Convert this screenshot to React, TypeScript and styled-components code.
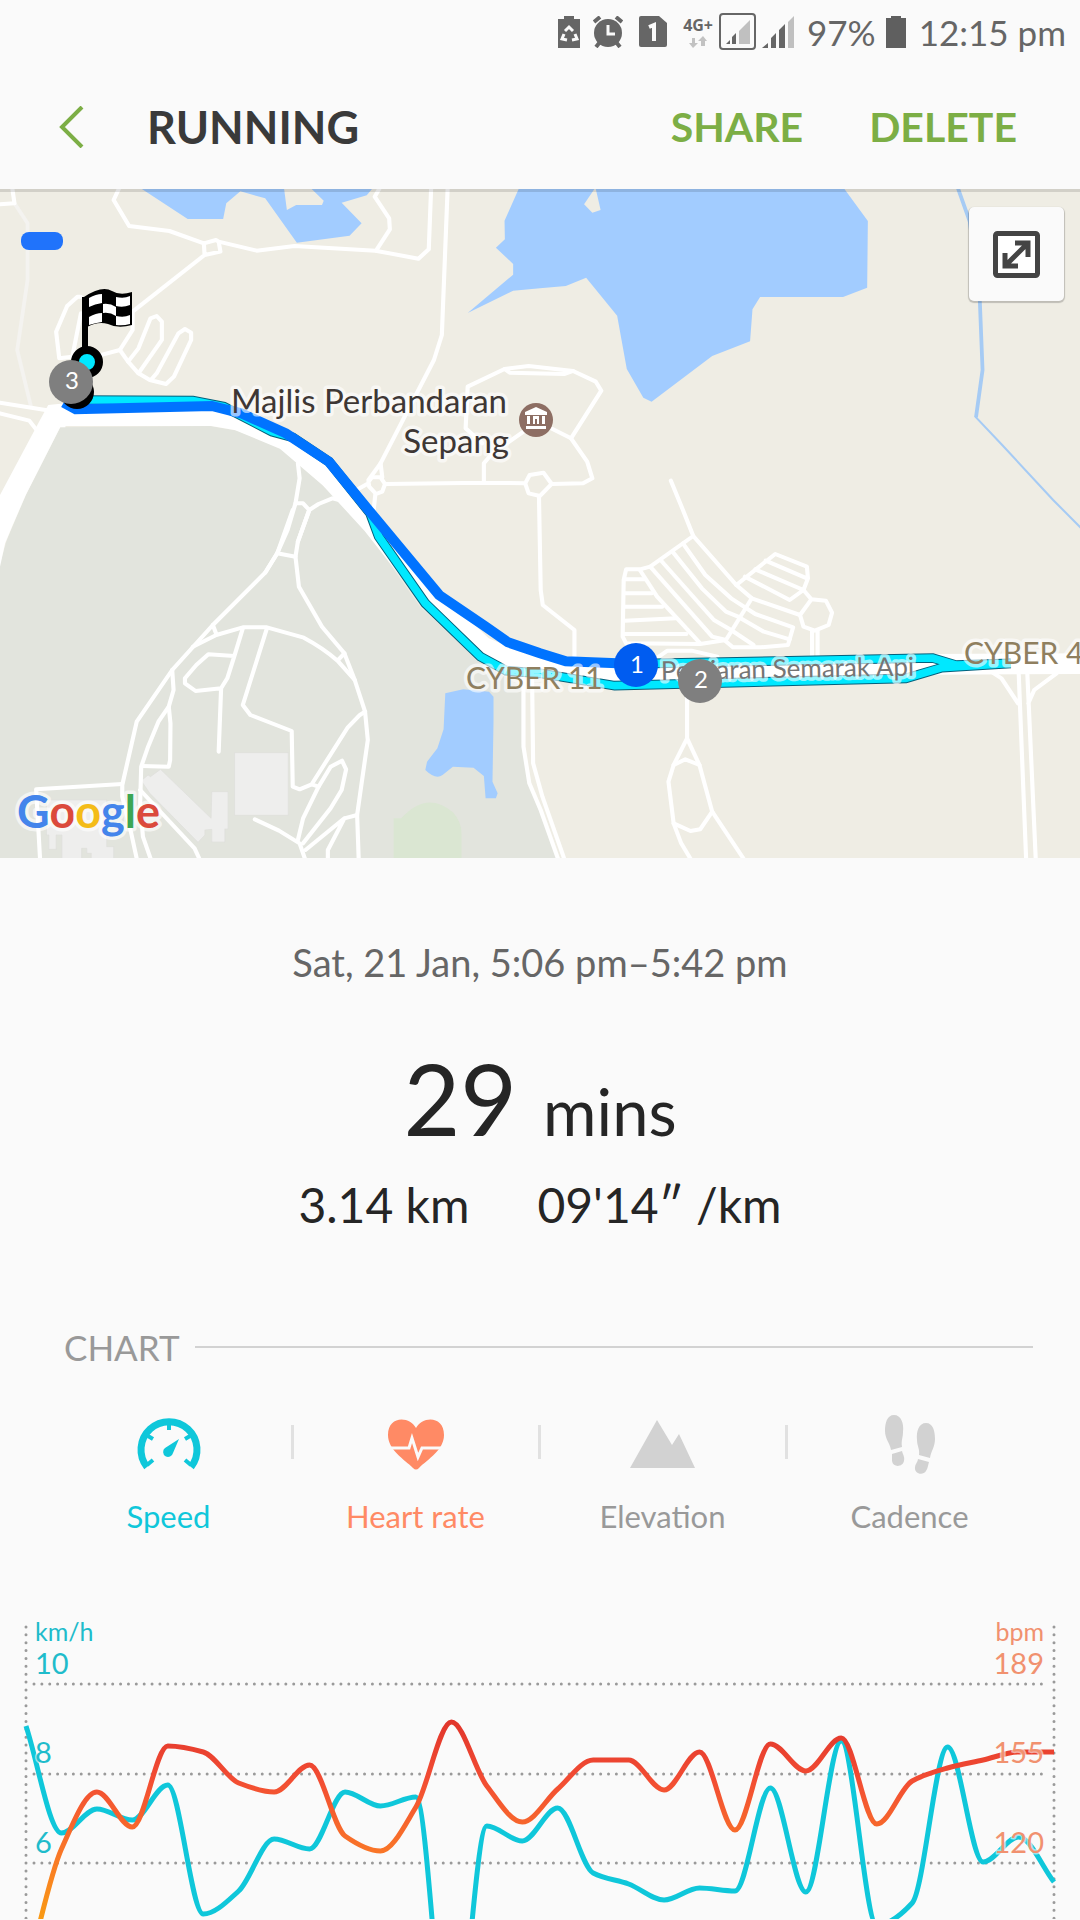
import React from "react";
import styled, { createGlobalStyle } from "styled-components";

const GlobalStyle = createGlobalStyle`
  *, *::before, *::after { box-sizing: border-box; }
  body { margin: 0; background: #fafafa; }
  button { font: inherit; border: 0; padding: 0; background: none; cursor: pointer; }
`;

const colors = {
  text: "#252525",
  muted: "#666666",
  faint: "#999999",
  green: "#7cae45",
  speed: "#0fc7da",
  heart: "#ff8a65",
  idle: "#d2d2d2",
};

const Screen = styled.div`
  width: 100%;
  overflow: hidden;
  background: #fafafa;
  color: ${colors.text};
  font-family: Lato, "Open Sans", sans-serif;
`;

const StatusBar = styled.div`
  display: flex;
  align-items: center;
  justify-content: flex-end;
  height: 64px;
  padding-right: 14px;
  color: ${colors.muted};
  font-size: 35px;
  line-height: 40px;
`;

const StatusItem = styled.span<{ $gap: number }>`
  display: flex;
  flex: none;
  margin-left: ${(p) => p.$gap}px;
`;

const Network = styled.span`
  display: flex;
  flex-direction: column;
  align-items: center;
  margin-left: 16px;
  gap: 3px;
  font: bold 16px/16px "Open Sans", sans-serif;
`;

const Header = styled.header`
  position: relative;
  z-index: 1;
  display: flex;
  align-items: center;
  height: 125px;
  padding: 0 63px 0 59px;
  box-shadow: 0 3px 0 rgba(0, 0, 0, 0.12);
`;

const BackButton = styled.button`
  display: flex;
  width: 88px;
  color: ${colors.green};
`;

const Title = styled.h1`
  flex: 1;
  margin: 0;
  color: #3a3a3a;
  font-size: 45px;
  line-height: 56px;
  font-weight: bold;
`;

const Actions = styled.div`
  display: flex;
  gap: 66px;
`;

const ActionButton = styled.button`
  color: ${colors.green};
  font-size: 41px;
  line-height: 56px;
  font-weight: bold;
`;

const MapFrame = styled.section`
  position: relative;
  aspect-ratio: 1080 / 669;
`;

const MapDrawing = styled.svg`
  display: block;
  width: 100%;
  height: 100%;
`;

const MapLabel = styled.text<{ $size: number }>`
  font-size: ${(p) => p.$size}px;
  paint-order: stroke;
  stroke: rgba(255, 255, 255, 0.6);
  stroke-width: 7px;
  stroke-linejoin: round;
`;

const MarkerNumber = styled.text`
  fill: #fff;
  font-size: 24px;
  text-anchor: middle;
`;

const ExpandButton = styled.button`
  position: absolute;
  top: 18px;
  right: 16px;
  display: grid;
  place-items: center;
  width: 95px;
  height: 94px;
  border-radius: 5px;
  background: #fafafa;
  box-shadow: 0 1px 1px 1px rgba(0, 0, 0, 0.2);
`;

const Summary = styled.section`
  display: flex;
  flex-direction: column;
  align-items: center;
  padding-top: 80px;
`;

const When = styled.p`
  margin: 0;
  color: ${colors.muted};
  font-size: 38px;
  line-height: 48px;
`;

const Duration = styled.p`
  display: flex;
  align-items: baseline;
  gap: 26px;
  margin: 52px 0 0;
  font-size: 98px;
  line-height: 120px;
`;

const DurationUnit = styled.span`
  font-size: 65px;
`;

const Totals = styled.div`
  display: flex;
  gap: 68px;
  margin-top: 2px;
  font-size: 48px;
  line-height: 64px;
`;

const SectionTitle = styled.h2`
  display: flex;
  align-items: center;
  gap: 15px;
  margin: 86px 47px 0 64px;
  color: ${colors.faint};
  font-size: 35px;
  line-height: 48px;
  font-weight: normal;

  &::after {
    content: "";
    flex: 1;
    height: 2px;
    background: ${colors.idle};
  }
`;

const Tabs = styled.div`
  display: grid;
  grid-template-columns: repeat(4, 1fr);
  margin: 37px 47px 0 45px;
`;

const Tab = styled.button<{ $color: string }>`
  position: relative;
  display: flex;
  flex-direction: column;
  align-items: center;
  gap: 18px;
  color: ${(p) => p.$color};
  font-size: 31px;
  line-height: 40px;

  &:not(:first-child)::before {
    content: "";
    position: absolute;
    left: -1px;
    top: 17px;
    width: 3px;
    height: 34px;
    background: #e1e1e1;
  }
`;

const TabIcon = styled.svg`
  display: block;
  width: 70px;
  height: 70px;
`;

const ChartDrawing = styled.svg`
  display: block;
  width: 100%;
  aspect-ratio: 1080 / 320;
  margin-top: 63px;
`;

const AxisLabel = styled.text<{ $unit?: boolean }>`
  font-size: ${(p) => (p.$unit ? 25 : 29)}px;
  paint-order: stroke;
  stroke: rgba(250, 250, 250, 0.6);
  stroke-width: 3px;
`;

/* ---------- map ---------- */

const northWestRoads = [
  "M35 20L42 70L0 73",
  "M348 20L330 60L375 138L492 153L592 190L627 180L635 185L745 212L855 198L1090 212L1215 236L1245 208L1252 20",
  "M592 190L594 225L640 215L635 185M594 225L385 395V450L348 510L275 530",
  "M1105 20L1088 50L1130 115L1132 148L1092 212",
  "M1300 20L1283 465L1260 540L1105 850L1070 900",
  "M235 350H225L195 378L163 455L172 535L210 530L235 400",
  "M348 510L372 545L402 580L435 600L482 612L505 590L555 480V458L537 447L518 460L455 580L440 598",
  "M372 545L402 505L437 415L455 408L470 425V480L402 580",
  "M1070 905L1080 892H1105L1118 912L1110 935L1092 942L1072 920ZM1105 850L1110 892M1035 930L1070 910M1090 942L1085 990",
  "M1120 912L1405 908L1525 910M1405 908V850L1430 820L1520 755",
  "M1400 790L1352 745L1358 620L1465 567L1535 558L1664 573L1730 605L1746 632L1658 775L1600 745",
  "M1465 567L1480 578L1640 582L1664 573M1658 775L1705 845L1720 895L1693 910L1602 912",
  "M1525 910L1538 885L1578 878L1602 912L1568 948L1535 940ZM1565 948L1570 1230L1576 1275L1668 1350V1430",
  "M0 668L150 693M0 700L85 722L110 755",
  "M865 850L870 895L858 970L835 1050L805 1120L770 1178M985 960L965 955L925 972L898 990L865 1085",
  "M858 970H880L898 990",
];

const southWestRoads = [
  "M850 0L805 130L770 188L618 345L500 480L397 635L355 825V860L380 965L400 1060",
  "M898 0L865 95L858 140L868 230L935 350L1000 430L1030 510L1060 605L1068 690L1050 820L1037 915L1042 1060",
  "M805 130L858 140M618 345L628 372M560 410L628 375L705 352H775L882 383Q940 415 980 452L1030 510M980 452L1000 430",
  "M705 355L680 440L660 505L642 535L635 725M680 438L605 433L570 465L537 505V520L568 543L642 535",
  "M775 355L705 585L727 615L847 663L850 830L870 838L905 823L1010 652L1045 615L1060 605M905 823L925 830",
  "M500 480L504 540L490 590L460 635L430 710L410 770L407 880L415 980L442 1060",
  "M490 590L495 640L494 750L490 770L412 768",
  "M355 822L105 838L117 1060M407 840L565 1015L585 1060",
  "M740 928L810 962L870 1000L890 1060",
  "M865 990L880 925L925 830L960 770L993 752L1005 778L992 840L960 895L880 1000",
  "M887 1020L1000 925L1037 915M1000 925L952 1020V1060",
  "M1520 500V710L1537 820L1570 900L1625 1060M1545 500L1548 760L1575 860L1643 1060",
];

const southEastRoads = [
  "M380 -88L415 0L445 78L570 225L615 265L755 315",
  "M445 78L320 170L290 178H250L243 210L240 380L250 400L465 402L540 390L615 265",
  "M245 208H305M245 250H325M245 290H355M245 332L395 325M245 372H425",
  "M290 180L340 260L465 400M320 170L500 380L540 390M350 150L505 330L555 360L620 405",
  "M385 125L470 235L540 305L575 320L650 365L725 388",
  "M415 100L480 195L555 265L625 312L735 352L720 405L640 412H560L535 390",
  "M570 225L683 132L775 170L778 205L765 240L725 270L595 200M655 152L775 205M625 178L765 240",
  "M765 240L788 268L830 272L848 308L838 345L798 362L765 350L755 315L788 268",
  "M790 362V440M806 362V440M345 440L370 422H440L515 440",
  "M427 540V685L388 765L373 815L388 940L410 1000L445 1060M427 685L463 765L500 905L600 1060",
  "M388 765L422 748L463 765M388 940L437 963L465 958L500 905",
  "M1390 490L1412 1060M1415 490L1440 1060M1310 485L1340 505L1388 580M1500 490L1435 540L1418 580",
];

const outboundRoute =
  "M230 660L560 662L650 680L790 755L850 772L955 845L1075 1000L1100 1070L1235 1270L1395 1430L1470 1472L1568 1480L1785 1517L2630 1495L2735 1463L2935 1450L2775 1455L2708 1434L1900 1450";
const returnRoute =
  "M185 668L220 688L615 678L700 700L830 760L955 845L1070 990L1275 1245L1410 1340L1475 1387L1568 1420L1643 1444L1850 1452";

function Roads({ paths }: { paths: string[] }) {
  return (
    <>
      {paths.map((d) => (
        <path key={d} d={d} />
      ))}
    </>
  );
}

function RouteMap() {
  return (
    <MapDrawing viewBox="0 0 1080 669" preserveAspectRatio="xMidYMid slice" role="img" aria-label="Route map">
      <rect width="1080" height="669" fill="#efede4" />
      <g transform="translate(0 -9) scale(0.34439 0.33333)" fill="none" strokeLinejoin="round">
        <path
          fill="#e2e4dd"
          d="M175 742L610 738L690 752L815 805L855 840L985 960L1090 1090L1220 1280L1400 1450L1515 1520V1690L1535 1810L1568 1900L1625 2050H0V1150L20 1080L75 945Z"
        />
        <g fill="#a2ccff">
          <path
            fillRule="evenodd"
            d="M412 27L545 117H648L657 70L698 34L770 55L862 188L1015 167L1050 130L992 68L1065 46L1080 27ZM825 27L833 90L860 75H935L940 62L905 27Z"
          />
          <path
            fillRule="evenodd"
            d="M1506 27L1465 122L1466 178L1440 203L1490 252V284L1358 399L1490 332L1568 325L1643 318L1702 293L1792 407L1820 567L1868 653L1892 665L2068 528L2178 484L2185 388L2207 351H2448L2518 323L2520 123L2452 27ZM1726 27L1696 73L1720 98L1744 90L1730 27Z"
          />
          <path d="M1293 1540L1345 1528L1420 1535L1433 1550V1625L1430 1805L1445 1840L1440 1855H1410L1405 1788L1375 1763L1315 1760L1285 1785Q1265 1800 1235 1770L1240 1745L1270 1705L1288 1648Z" />
        </g>
        <path stroke="#a6cbf4" strokeWidth="11" d="M2780 20L2816 125L2845 360L2853 570L2834 712" />
        <path stroke="#a6cbf4" strokeWidth="6" d="M2832 710L2910 795L3058 960L3140 1045" />
        <path fill="#dae6d2" d="M1143 2040V1915H1165Q1240 1830 1315 1897Q1340 1925 1340 1960V2040Z" />
        <g fill="#eeeeed" stroke="#dedfdb" strokeWidth="2">
          <path d="M681 1718H837V1906H681Z" />
          <path d="M466 1768L613 1915L615 1835H662V1947H653V1986H615V1948L595 1950V1965L575 1987L435 1840L410 1802L430 1785L437 1790Z" />
          <path d="M135 1860H310V2000H330V2040H265V2020H252V2005H237V2040H180V1965H163V2008H142V1965H135Z" />
        </g>
        <path stroke="#f4f3f0" strokeWidth="11" d="M42 70L80 130V300L50 510L90 680" />
        <g stroke="#fff" strokeWidth="12" strokeLinecap="round">
          <Roads paths={northWestRoads} />
          <g transform="translate(0 990)">
            <Roads paths={southWestRoads} />
          </g>
          <g transform="translate(1568 990)">
            <Roads paths={southEastRoads} />
          </g>
        </g>
        <path fill="#fff" d="M140 675L190 670V742H175L75 945L35 1040L15 1090L0 1160V945L115 722Z" />
        <path
          stroke="#fff"
          strokeWidth="62"
          d="M165 707L610 706L690 720L830 780L960 895L1080 1030L1240 1240L1400 1400L1500 1445L1790 1490L2300 1465L2710 1453L3150 1451"
        />
        <path stroke="#03607c" strokeWidth="29" strokeLinejoin="miter" d={outboundRoute} />
        <path stroke="#00e8ff" strokeWidth="23" strokeLinejoin="miter" d={outboundRoute} />
        <path stroke="#0073ff" strokeWidth="30" strokeLinejoin="miter" d={returnRoute} />
      </g>

      <MapLabel $size={33} x="507" y="224" textAnchor="end" fill="#3e3735">Majlis Perbandaran</MapLabel>
      <MapLabel $size={33} x="509" y="264" textAnchor="end" fill="#3e3735">Sepang</MapLabel>
      <MapLabel $size={30} x="466" y="500" fill="#8f7f5f">CYBER 11</MapLabel>
      <MapLabel $size={30} x="964" y="475" fill="#8f7f5f">CYBER 4</MapLabel>
      <MapLabel $size={26} x="661" y="491" fill="#757575" transform="rotate(-1 660 491)">Persiaran Semarak Api</MapLabel>

      <circle cx="536" cy="231" r="17" fill="#8d6e63" />
      <path
        fill="#fff"
        d="M525 226V223L536 218L547 223V226ZM526 237H546V240H526ZM527 227H530V235H527ZM533 227H539V235H537V230H535V235H533ZM542 227H545V235H542Z"
      />

      <rect x="21" y="43" width="42" height="18" rx="8" fill="#2073fb" />

      <path d="M82 108H88V162H82Z" />
      <path d="M84 108Q102 96 112 102Q120 107 132 103V136Q118 140 108 135Q98 132 87 138Z" />
      <path
        fill="#fff"
        d="M89 109Q96 105 102 105V114Q95 115 89 118ZM89 128Q96 124 102 124V133Q95 134 89 136ZM116 108Q124 110 130 107V116Q123 119 116 117ZM116 127Q124 129 130 126V135Q123 137 116 136ZM103 115Q110 114 116 118V127Q110 123 103 124Z"
      />
      <circle cx="77" cy="203" r="17" fill="#000" />
      <circle cx="87" cy="173" r="12" fill="#00e8ff" stroke="#000" strokeWidth="8" />
      <circle cx="71" cy="193" r="22" fill="#7f7f7f" />
      <circle cx="636" cy="476" r="22" fill="#005cf0" />
      <circle cx="700" cy="492" r="22" fill="#7f7f7f" />
      <MarkerNumber x="72" y="200">3</MarkerNumber>
      <MarkerNumber x="637" y="484">1</MarkerNumber>
      <MarkerNumber x="701" y="499">2</MarkerNumber>

      <MapLabel $size={45} x="17" y="639" fontWeight="bold">
        <tspan fill="#4485eb">G</tspan>
        <tspan fill="#db4a3c">o</tspan>
        <tspan fill="#f4bc18">o</tspan>
        <tspan fill="#4485eb">g</tspan>
        <tspan fill="#3ca654">l</tspan>
        <tspan fill="#db4a3c">e</tspan>
      </MapLabel>
    </MapDrawing>
  );
}

/* ---------- chart ---------- */

const speed = [
  127, 234, 210, 221, 186, 315, 292, 240, 250, 193, 207, 198, 480, 227, 242, 209, 274, 285, 301, 289, 292, 189, 293,
  142, 326, 304, 148, 263, 238, 283,
];
const heartRate = [
  378, 250, 193, 228, 147, 153, 184, 193, 166, 237, 252, 208, 123, 187, 223, 190, 161, 161, 191, 153, 231, 145, 172,
  139, 225, 182, 169, 161, 153, 153,
];

const LEFT = 26;
const RIGHT = 1054;

function smoothPath(values: number[]) {
  const step = (RIGHT - LEFT) / (values.length - 1);
  const slope = values.map((v, i) => {
    if (i === 0) return values[1] - v;
    if (i === values.length - 1) return v - values[i - 1];
    const before = v - values[i - 1];
    const after = values[i + 1] - v;
    if (before * after <= 0) return 0;
    return (2 * before * after) / (before + after);
  });
  return values
    .map((v, i) => {
      const x = LEFT + step * i;
      if (i === 0) return `M${x} ${v}`;
      const c1 = `${x - (step * 2) / 3} ${values[i - 1] + slope[i - 1] / 3}`;
      const c2 = `${x - step / 3} ${v - slope[i] / 3}`;
      return `C${c1} ${c2} ${x} ${v}`;
    })
    .join("");
}

function Chart() {
  return (
    <ChartDrawing viewBox="0 0 1080 320" role="img" aria-label="Speed and heart rate over time">
      <defs>
        <linearGradient id="pulse" gradientUnits="userSpaceOnUse" x1="0" y1="120" x2="0" y2="320">
          <stop offset="0" stopColor="#e0352b" />
          <stop offset="0.3" stopColor="#f24c33" />
          <stop offset="0.65" stopColor="#f97428" />
          <stop offset="1" stopColor="#f99a14" />
        </linearGradient>
      </defs>
      <g stroke="#9a9a9a" strokeWidth="3" strokeLinecap="round" strokeDasharray="0 7.87">
        {[85, 175, 264].map((y) => (
          <path key={y} d={`M34 ${y}H1046`} />
        ))}
        <path d="M26 28V330M1054 28V330" />
      </g>
      <g fill="none" strokeWidth="5">
        <path d={smoothPath(speed)} stroke={colors.speed} />
        <path d={smoothPath(heartRate)} stroke="url(#pulse)" />
      </g>
      <g fill="#1fbccb">
        <AxisLabel $unit x="35" y="42">km/h</AxisLabel>
        <AxisLabel x="35" y="75">10</AxisLabel>
        <AxisLabel x="35" y="164">8</AxisLabel>
        <AxisLabel x="35" y="254">6</AxisLabel>
      </g>
      <g fill="#f1916f" textAnchor="end">
        <AxisLabel $unit x="1044" y="42">bpm</AxisLabel>
        <AxisLabel x="1044" y="75">189</AxisLabel>
        <AxisLabel x="1044" y="164">155</AxisLabel>
        <AxisLabel x="1044" y="254">120</AxisLabel>
      </g>
    </ChartDrawing>
  );
}

/* ---------- page ---------- */

export default function App() {
  return (
    <Screen>
      <GlobalStyle />
      <StatusBar>
        <StatusItem $gap={0}>
          <svg width="22" height="32" viewBox="0 0 22 32">
            <path fill="#666" d="M6 0H16V3H22V32H0V3H6Z" />
            <path fill="none" stroke="#fafafa" strokeWidth="3" d="M7 15L11 11L15 15M17 18L19 23L14 24M9 24L4 23L6 18" />
          </svg>
        </StatusItem>
        <StatusItem $gap={13}>
          <svg width="30" height="32" viewBox="0 0 30 32">
            <circle cx="15" cy="17" r="14" fill="#666" />
            <path stroke="#666" strokeWidth="4" d="M1 6L7 1M29 6L23 1M3 31L7 26M27 31L23 26" />
            <path fill="none" stroke="#fafafa" strokeWidth="3" d="M15 9V18H22" />
          </svg>
        </StatusItem>
        <StatusItem $gap={16}>
          <svg width="28" height="32" viewBox="0 0 28 32">
            <path fill="#666" d="M2 0H20L28 7V29Q28 31 26 31H2Q0 31 0 29V2Q0 0 2 0Z" />
            <path fill="none" stroke="#fafafa" strokeWidth="4" d="M10 11L15 9V25" />
          </svg>
        </StatusItem>
        <Network>
          4G+
          <svg width="18" height="12" viewBox="0 0 18 12">
            <path fill="#c2c2c2" d="M3 2H6V7H9L4 12L0 7H3ZM12 10V5H9L14 0L18 5H16V10Z" />
          </svg>
        </Network>
        <StatusItem $gap={6}>
          <svg width="38" height="38" viewBox="0 0 38 38">
            <rect x="1" y="1" width="35" height="35" rx="3" fill="none" stroke="#666" strokeWidth="2" />
            <path fill="#c0c0c0" d="M20 31V18L31 7V31Z" />
            <path fill="#666" d="M13 31V24L17 20V31ZM7 31L11 27V31Z" />
          </svg>
        </StatusItem>
        <StatusItem $gap={5}>
          <svg width="32" height="32" viewBox="0 0 32 32">
            <path fill="#666" d="M0 32L6 27V32ZM9 32V22L14 17V32ZM17 32V14L23 8V32Z" />
            <path fill="#c0c0c0" d="M26 32V6L32 0V32Z" />
          </svg>
        </StatusItem>
        <StatusItem $gap={13}>97%</StatusItem>
        <StatusItem $gap={10}>
          <svg width="20" height="32" viewBox="0 0 20 32">
            <path fill="#5f5f5f" d="M5 0H15V2H20V32H0V2H5Z" />
          </svg>
        </StatusItem>
        <StatusItem $gap={13}>12:15 pm</StatusItem>
      </StatusBar>

      <Header>
        <BackButton aria-label="Back">
          <svg width="25" height="42" viewBox="0 0 25 42">
            <path fill="none" stroke="currentColor" strokeWidth="4" d="M23 1L3 21L23 41" />
          </svg>
        </BackButton>
        <Title>RUNNING</Title>
        <Actions>
          <ActionButton>SHARE</ActionButton>
          <ActionButton>DELETE</ActionButton>
        </Actions>
      </Header>

      <MapFrame>
        <RouteMap />
        <ExpandButton aria-label="Expand map">
          <svg width="47" height="47" viewBox="0 0 47 47">
            <rect x="2.5" y="2.5" width="42" height="42" rx="2" fill="#fff" stroke="#444" strokeWidth="5" />
            <path fill="none" stroke="#444" strokeWidth="5" d="M12 35L35 12M22 12H35V26M12 22V35H25" />
          </svg>
        </ExpandButton>
      </MapFrame>

      <Summary>
        <When>Sat, 21 Jan, 5:06 pm–5:42 pm</When>
        <Duration>
          29<DurationUnit>mins</DurationUnit>
        </Duration>
        <Totals>
          <span>3.14 km</span>
          <span>09'14″ /km</span>
        </Totals>
      </Summary>

      <SectionTitle>CHART</SectionTitle>
      <Tabs>
        <Tab $color={colors.speed} aria-pressed="true">
          <TabIcon viewBox="0 0 70 70">
            <path fill="none" stroke="currentColor" strokeWidth="7" d="M13 59A28 28 0 1 1 57 59" />
            <path stroke="currentColor" strokeWidth="4" d="M35 14V22M14 28L19 31M56 28L51 31M13 57L19 52M57 57L51 52" />
            <path fill="currentColor" d="M45 31L39 45A5 5 0 1 1 31 40Z" />
          </TabIcon>
          Speed
        </Tab>
        <Tab $color={colors.heart} aria-pressed="true">
          <TabIcon viewBox="0 0 70 70">
            <path
              fill="currentColor"
              d="M35 20C41 8 63 7 63 27C63 42 47 51 38 60Q35 63 32 60C23 51 7 42 7 27C7 7 29 8 35 20Z"
            />
            <path fill="none" stroke="#fafafa" strokeWidth="3" d="M7 40H28L31 30L37 49L41 40H63" />
          </TabIcon>
          Heart rate
        </Tab>
        <Tab $color={colors.faint} aria-pressed="false">
          <TabIcon viewBox="0 0 70 70">
            <path fill={colors.idle} d="M2 60L29 12L44 37L51 26L67 60Z" />
          </TabIcon>
          Elevation
        </Tab>
        <Tab $color={colors.faint} aria-pressed="false">
          <TabIcon viewBox="0 0 70 70">
            <g fill={colors.idle}>
              <path d="M19 7C26 7 29 15 28 24C28 30 26 32 27 39L16 42C15 35 10 31 10 23C10 15 12 7 19 7Z" />
              <path d="M17 46L27 43C28 47 30 49 29 53C28 59 18 60 17 53Z" />
              <path d="M51 15C58 15 60 23 60 31C60 39 56 43 55 50L44 47C45 41 42 38 42 32C41 23 44 15 51 15Z" />
              <path d="M43 51L54 54C53 57 53 60 51 63C48 68 39 66 40 59C40 56 43 54 43 51Z" />
            </g>
          </TabIcon>
          Cadence
        </Tab>
      </Tabs>
      <Chart />
    </Screen>
  );
}
